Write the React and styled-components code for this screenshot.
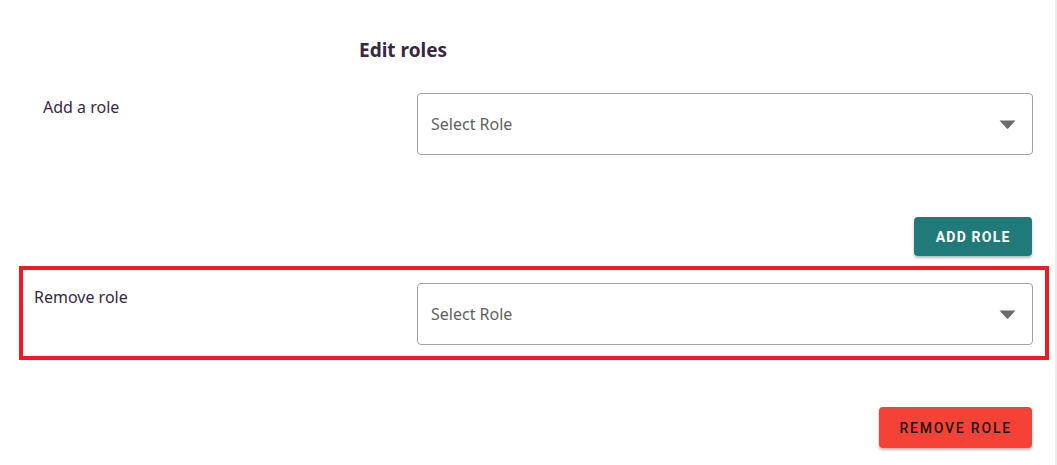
import React from 'react';
import styled, { createGlobalStyle } from 'styled-components';

const GlobalStyle = createGlobalStyle`
  html, body {
    margin: 0;
    padding: 0;
    background: #ffffff;
  }
  body {
    font-family: "Noto Sans", "Open Sans", sans-serif;
  }
`;

const Page = styled.div`
  width: 1055px;
  height: 465px;
  border-right: 2px solid #ececec;
  overflow: hidden;
`;

const Title = styled.h2`
  margin: 38px 0 0 0;
  padding-left: 359px;
  font-family: "Noto Sans", sans-serif;
  font-size: 19px;
  font-weight: 700;
  line-height: 24px;
  color: #3b2645;
`;

const Row = styled.div`
  display: grid;
  grid-template-columns: ${(p) => p.$labelWidth}px 616px;
  padding-left: ${(p) => p.$indent}px;
  margin-top: ${(p) => p.$top || 0}px;
`;

const Label = styled.div`
  padding-top: 3px;
  font-family: "Noto Sans", sans-serif;
  font-size: 16px;
  line-height: 22px;
  color: #3b2645;
`;

const SelectBox = styled.div`
  box-sizing: border-box;
  height: 62px;
  border: 1px solid #a3a3a3;
  border-radius: 4px;
  display: flex;
  align-items: center;
  justify-content: space-between;
  padding: 0 16px 0 13px;
  font-family: "Noto Sans", sans-serif;
  font-size: 16px;
  color: #616161;
  background: #fff;
`;

const ButtonRow = styled.div`
  display: flex;
  justify-content: flex-end;
  padding-right: 23px;
  margin-top: ${(p) => p.$top}px;
`;

const Button = styled.button`
  box-sizing: border-box;
  height: ${(p) => p.$height}px;
  padding: 0 ${(p) => p.$pad}px;
  border: none;
  border-radius: 4px;
  background: ${(p) => p.$bg};
  color: ${(p) => p.$color};
  font-family: Roboto, sans-serif;
  font-size: 14px;
  font-weight: ${(p) => p.$weight};
  letter-spacing: ${(p) => p.$spacing}px;
  text-transform: uppercase;
  box-shadow: 0 2px 3px rgba(0, 0, 0, 0.28);
  cursor: pointer;
`;

const Highlight = styled.div`
  box-sizing: border-box;
  width: 1030px;
  margin: 10px 0 0 19px;
  border: 4px solid #ed1c24;
  padding: 13px 0 11px 0;
`;

const Arrow = () => (
  <svg width="17" height="9" viewBox="0 0 17 9">
    <path d="M0.5 0.5 H16.5 L9.2 8.4 Q8.5 9 7.8 8.4 Z" fill="#6b6b6b" />
  </svg>
);

const Select = ({ placeholder }) => (
  <SelectBox>
    <span>{placeholder}</span>
    <Arrow />
  </SelectBox>
);

export default function App() {
  return (
    <Page>
      <GlobalStyle />
      <Title>Edit roles</Title>
      <Row $labelWidth={374} $indent={43} $top={31}>
        <Label>Add a role</Label>
        <Select placeholder="Select Role" />
      </Row>
      <ButtonRow $top={62}>
        <Button $height={39} $pad={21.5} $bg="#217a7a" $color="#ffffff" $weight={700} $spacing={1.2}>
          Add role
        </Button>
      </ButtonRow>
      <Highlight>
        <Row $labelWidth={383} $indent={11}>
          <Label>Remove role</Label>
          <Select placeholder="Select Role" />
        </Row>
      </Highlight>
      <ButtonRow $top={47}>
        <Button $height={41} $pad={20} $bg="#f44336" $color="#1c1414" $weight={500} $spacing={1.8}>
          Remove role
        </Button>
      </ButtonRow>
    </Page>
  );
}
